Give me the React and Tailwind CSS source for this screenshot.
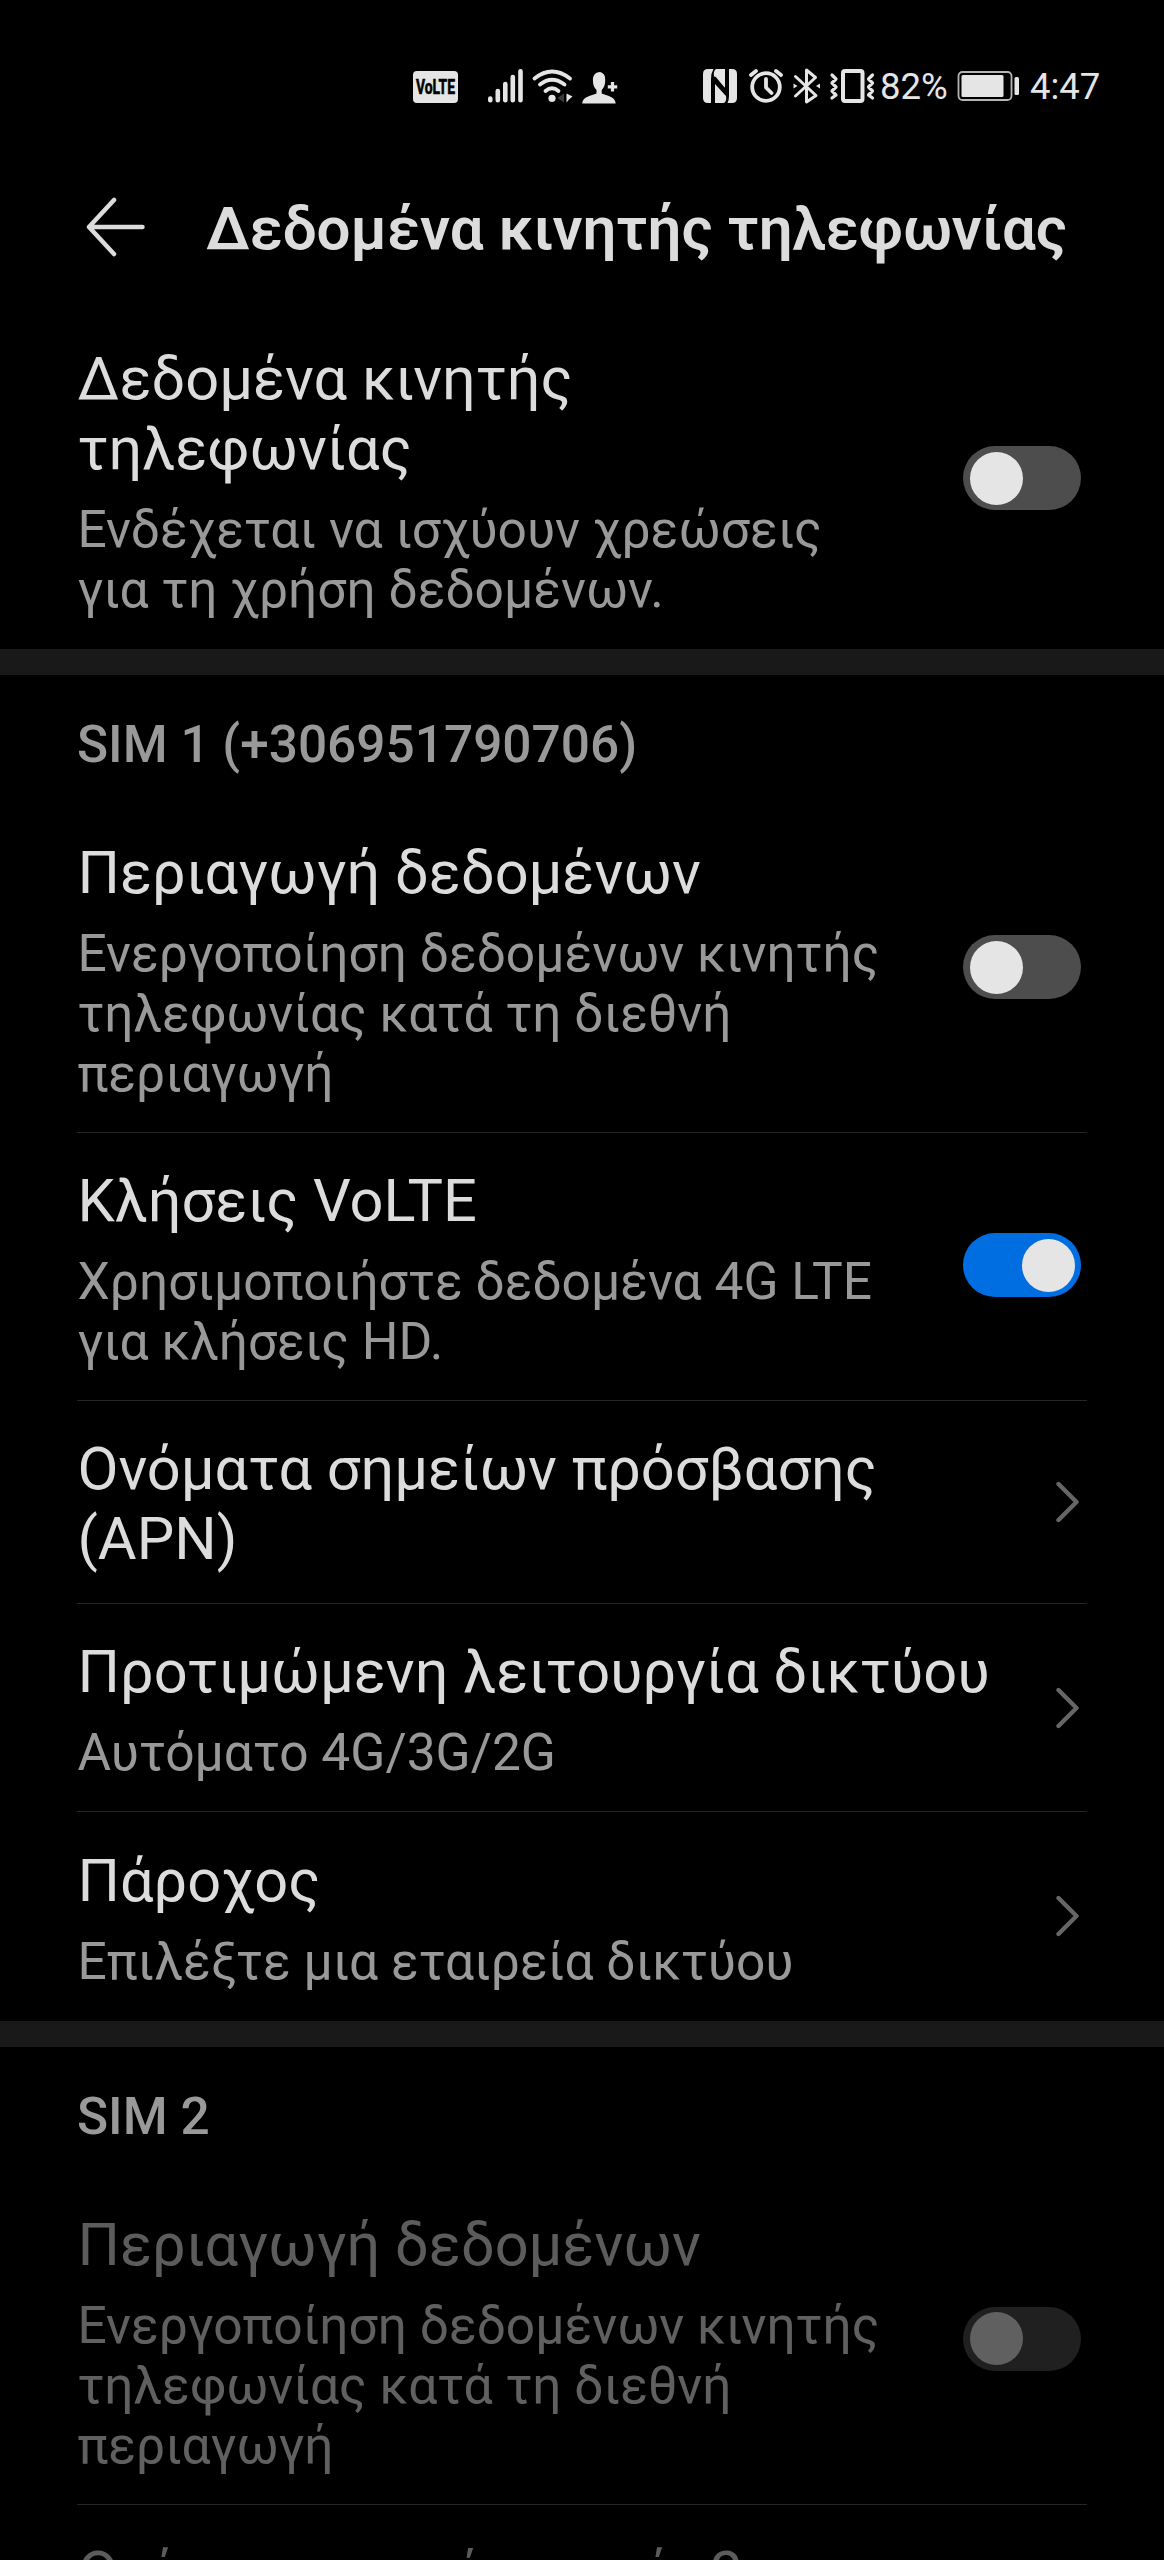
import React from "react";

const simRows = [
  {
    title: "Περιαγωγή δεδομένων",
    text: "Ενεργοποίηση δεδομένων κινητής τηλεφωνίας κατά τη διεθνή περιαγωγή",
    control: "off",
  },
  {
    title: "Κλήσεις VoLTE",
    text: "Χρησιμοποιήστε δεδομένα 4G LTE για κλήσεις HD.",
    control: "on",
  },
  { title: "Ονόματα σημείων πρόσβασης (APN)", control: "link" },
  { title: "Προτιμώμενη λειτουργία δικτύου", text: "Αυτόματο 4G/3G/2G", control: "link" },
  { title: "Πάροχος", text: "Επιλέξτε μια εταιρεία δικτύου", control: "link" },
];

function Toggle({ on }) {
  return (
    <div className={`mb-[3px] flex h-16 w-[118px] items-center rounded-full px-[6.5px] ${on ? "justify-end bg-[#006ee0]" : "bg-[#4d4d4d]"}`}>
      <div className="size-[53px] rounded-full bg-[#e5e5e5]"></div>
    </div>
  );
}

function Chevron() {
  return (
    <svg className="mr-0.5" width="23" height="42" viewBox="0 0 23 42" fill="none" stroke="#666666" strokeWidth="4.4" strokeLinecap="round" strokeLinejoin="round">
      <path d="M2.500 3L20.500 21 2.500 39" />
    </svg>
  );
}

function Row({ title, text, control, disabled, last }) {
  return (
    <div className="px-[77px]">
      <div className={`flex items-center justify-between border-b pr-[6px] ${last ? "border-transparent" : "border-[#262626]"}`}>
        <div className={`pt-[33.1px] pl-[0.5px] ${text ? "pb-7" : "pb-[29px]"} ${control === "link" ? "w-[940px]" : "w-[820px]"} ${disabled ? "opacity-[0.42]" : ""}`}>
          <p className="text-[59.5px] leading-[70px] text-[#dcdcdc]">{title}</p>
          {text && <p className={`mt-4 text-[51.5px] leading-[60px] ${disabled ? "text-[#e5e5e5]" : "text-[#999999]"}`}>{text}</p>}
        </div>
        <div className={disabled ? "opacity-[0.42]" : ""}>
          {control === "link" ? <Chevron /> : <Toggle on={control === "on"} />}
        </div>
      </div>
    </div>
  );
}

function SectionTitle({ children }) {
  return (
    <h2 className="box-content flex h-[130px] items-start border-t-[26px] border-[#191919] pl-[77px] text-[51.4px] leading-[60px] font-medium text-[#999999]">
      <span className="mt-10">{children}</span>
    </h2>
  );
}

function LeftIcons() {
  return (
    <svg width="240" height="80" viewBox="0 0 240 80" fill="#e5e5e5">
      <rect x="13" y="21" width="45" height="32" rx="4" />
      <text x="35.5" y="44" fill="#000" stroke="#000" strokeWidth=".6" fontSize="20" fontWeight="700" textAnchor="middle" textLength="39" lengthAdjust="spacingAndGlyphs">VoLTE</text>
      <g stroke="#e5e5e5" strokeWidth="4.6" strokeLinecap="round">
        <path d="M90.3 48.5v1.8M97.8 41v9.3M105.3 34v16.3M112.8 27v23.3M120.5 21.2v29.1" />
      </g>
      <g fill="none" stroke="#e5e5e5" strokeWidth="3.8" strokeLinecap="round">
        <path d="M134.5 28.5Q152 14.5 170 28.5M140 34.5Q152 25 164.500 34.500M145.500 41Q152 35.500 158.500 41" />
      </g>
      <circle cx="152" cy="48.300" r="3.600" />
      <path d="M164 43.500v9l-6.500-4.500z" fill="#3a3a3a" />
      <path d="M166.500 43.500l6 3-3.500 3-2.500 3z" />
      <path d="M200 22c-5 0-7.500 4-7 9 0 5 2 7 3.500 9v3.500c-5 2-14 3-14.300 10h33.500c-.3-7-9-8-14-10V40c2-2 3.500-5 3.500-9 .3-5-1-8-5.200-9z" />
      <path d="M207.800 36.800h9.400M212.500 32v9.500" stroke="#e5e5e5" strokeWidth="3.200" />
    </svg>
  );
}

function RightIcons() {
  return (
    <svg width="190" height="80" viewBox="0 0 190 80" fill="none" stroke="#e5e5e5" strokeLinecap="round" strokeLinejoin="round">
      <g fill="#e5e5e5" stroke="none">
        <path d="M18 19h5.500Q21 23 21 29v24h-3q-5 0-5-5V24q0-5 5-5z" />
        <path d="M26 19h9v19L24 27q-1-6 2-8z" />
        <path d="M25 34l11 12q1 5-2 7h-9z" />
        <path d="M39 19h3q5 0 5 5v24q0 5-5 5h-4.500Q39 50 39 46z" />
      </g>
      <path d="M24.500 28.500L36.500 43" stroke="#000" strokeWidth="4" />
      <g strokeWidth="3.800">
        <circle cx="76" cy="37" r="13.800" />
        <path d="M76 29v8.500l5.500 5.500M61 25l5-4M86 21l5 4" />
      </g>
      <path d="M105.500 26.500L126 45.500 116.500 52V20L125.500 27.500 105.500 46" strokeWidth="3" />
      <path d="M103.500 33.500v5l4-2.500zM130 33.500v5l-4-2.500z" fill="#e5e5e5" stroke="none" />
      <rect x="153" y="21" width="19.500" height="30" rx="2" strokeWidth="4" />
      <path d="M142 25l4 4-4 4 4 4-4 4 4 4-4 3M182.500 25l-4 4 4 4-4 4 4 4-4 4 4 3" strokeWidth="3.200" />
    </svg>
  );
}

function StatusBar() {
  return (
    <div className="flex h-[130px] items-start pt-[50px] pl-[400px] text-[#e5e5e5]">
      <LeftIcons />
      <div className="ml-[50px]">
        <RightIcons />
      </div>
      <span className="mt-[15px] w-[77px] text-[36.500px] leading-[44px] whitespace-nowrap">82%</span>
      <svg width="64" height="80" viewBox="0 0 64 80" fill="#e5e5e5">
        <rect x="1.500" y="22" width="53" height="28" rx="4" fill="none" stroke="#b5b5b5" strokeWidth="1.800" />
        <rect x="4.500" y="25" width="42" height="22" rx="1.500" />
        <rect x="57.500" y="27" width="4.500" height="18" rx="1.500" />
      </svg>
      <span className="mt-[15px] ml-[9px] text-[36.500px] leading-[44px]">4:47</span>
    </div>
  );
}

export default function App() {
  return (
    <div className="h-[2560px] w-[1164px] overflow-hidden bg-black font-['Roboto',sans-serif]">
      <StatusBar />
      <header className="flex h-[181px] items-start pt-[64px] pl-[85px]">
        <svg className="mt-[3px]" width="62" height="62" viewBox="0 0 62 62" fill="none" stroke="#dcdcdc" strokeWidth="4.500" strokeLinecap="round" strokeLinejoin="round">
          <path d="M57.500 30H4M29 3L4 30l25 27" />
        </svg>
        <h1 className="ml-[59px] text-[60px] leading-[70px] font-semibold whitespace-nowrap text-[#dcdcdc]">Δεδομένα κινητής τηλεφωνίας</h1>
      </header>
      <Row title="Δεδομένα κινητής τηλεφωνίας" text="Ενδέχεται να ισχύουν χρεώσεις για τη χρήση δεδομένων." control="off" last />
      <SectionTitle>SIM 1 (+306951790706)</SectionTitle>
      {simRows.map((row, index) => (
        <Row key={row.title} {...row} last={index === simRows.length - 1} />
      ))}
      <SectionTitle>SIM 2</SectionTitle>
      {simRows.slice(0, 1).map((row) => (
        <Row key={row.title} {...row} disabled />
      ))}
      <Row title="Ονόματα σημείων πρόσβασης (APN)" control="link" disabled last />
    </div>
  );
}
